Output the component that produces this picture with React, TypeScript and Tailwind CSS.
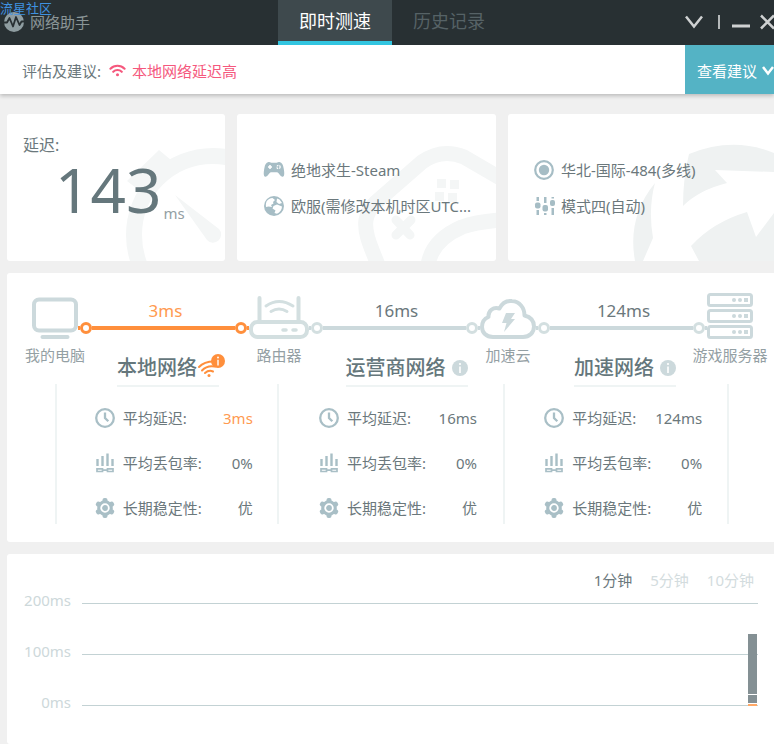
import React, { useState } from 'react'

const lineColor = '#ccd9dc'

const columns = [
    { name: '本地网络', delay: '3ms', loss: '0%', stability: '优', bad: true },
    { name: '运营商网络', delay: '16ms', loss: '0%', stability: '优', bad: false },
    { name: '加速网络', delay: '124ms', loss: '0%', stability: '优', bad: false },
]

const ranges = ['1分钟', '5分钟', '10分钟']

// 102px of plot height stand for 200ms
const sample = [
    { ms: 118, color: 'bg-[#849094]' },
    { ms: 16, color: 'bg-[#849094]' },
    { ms: 4, color: 'bg-[#ffa866]' },
]

const LogoIcon = () => (
    <svg width="20" height="20" viewBox="0 0 20 20" className="shrink-0">
        <circle cx="10" cy="10" r="10" fill="#8f9da1" />
        <path d="M0 10.500h3L5.500 6l3.500 8.500L12 5l3.500 8 2-3.500H20" fill="none" stroke="#283033" strokeWidth="1.800" strokeLinejoin="round" />
    </svg>
)

const WifiIcon = ({ className, color }: { className?: string; color: string }) => (
    <svg viewBox="0 0 18 14" className={className} fill="none" stroke={color} strokeWidth="2.200" strokeLinecap="round">
        <path d="M1.500 5a10.500 10.500 0 0 1 15 0M4.500 8.300a6.300 6.300 0 0 1 9 0" />
        <circle cx="9" cy="11.500" r="1.600" fill={color} stroke="none" />
    </svg>
)

const WeakWifiIcon = () => (
    <svg width="22" height="20" viewBox="0 0 22 20" fill="none" stroke="#ff8f3c" strokeWidth="2" strokeLinecap="round">
        <path d="M2 9Q7 3.500 17 3.500M5 12.500q5-5.500 13-4M8 15q4-3.500 8-1.500" />
        <circle cx="12" cy="17.500" r="1.500" fill="#ff8f3c" stroke="none" />
    </svg>
)

const InfoIcon = ({ className, color }: { className?: string; color: string }) => (
    <svg viewBox="0 0 16 16" className={className}>
        <circle cx="8" cy="8" r="8" fill={color} />
        <circle cx="8" cy="4" r="1.100" fill="#fff" />
        <path d="M8 6.500v6.500" stroke="#fff" strokeWidth="1.600" />
    </svg>
)

const PadIcon = () => (
    <svg width="22" height="20" viewBox="0 0 22 20" className="shrink-0">
        <path d="M5.500 2C7 1.500 8 2.800 9 2.800h4c1 0 2-1.300 3.500-.8 2.500.5 3.500 2.500 4.200 6.500.7 4 1 7.500-.7 8.200-2 .7-3.500-2.700-5-3.900-.6-.5-1-.5-1.500-.5h-5c-.5 0-.9 0-1.500.5-1.500 1.200-3 4.600-5 3.900C.3 16 .6 12.500 1.300 8.500 2 4.500 3 2.500 5.500 2z" fill="#a6bdc5" />
        <path d="M7 5v4M5 7h4" stroke="#fff" strokeWidth="1.600" />
        <circle cx="15.500" cy="7" r="1.700" fill="none" stroke="#fff" strokeWidth="1.200" strokeDasharray="1.700 1" />
    </svg>
)

const GlobeIcon = () => (
    <svg width="22" height="20" viewBox="0 0 22 20" className="shrink-0">
        <circle cx="11" cy="10" r="10" fill="#a6bdc5" />
        <path d="M3.500 5.500C5 3.500 7 2 9.500 2l2.500 2-2 2 .5 1.500L8 9l1 2-3.500-.5L3 11c-.3-2 0-4 .5-5.500zM14 2.500l2.500 1 2.500 3.500-3 1-2.500-2zM10.500 10l3.500-1.500 5 2c0 3-2 6-5 7.300L11.500 17l1-2.500-3-2z" fill="#fff" />
    </svg>
)

const TargetIcon = () => (
    <svg width="22" height="20" viewBox="0 0 22 20" className="shrink-0">
        <circle cx="11" cy="10" r="8.800" fill="none" stroke="#a6bdc5" strokeWidth="2.200" />
        <circle cx="11" cy="10" r="5.200" fill="#a6bdc5" />
    </svg>
)

const SlidersIcon = () => (
    <svg width="22" height="20" viewBox="0 0 22 20" className="shrink-0" fill="#a6bdc5">
        <path d="M3.500 1h2.500v4h-2.500zM3.500 14h2.500v5h-2.500zM11 1h2.500v6h-2.500zM11 17h2.500v2h-2.500zM18.500 1h2.500v1.500h-2.500zM18.500 12h2.500v7h-2.500z" />
        <rect x="2" y="6.500" width="5.500" height="6" rx="2" />
        <rect x="9.500" y="9" width="5.500" height="6.500" rx="2" />
        <rect x="17" y="4" width="5" height="6" rx="2" />
    </svg>
)

const ClockIcon = () => (
    <svg width="20" height="20" viewBox="0 0 20 20" fill="none" stroke="#a9bfc6" strokeWidth="2.300" className="shrink-0">
        <circle cx="10" cy="10" r="8.800" />
        <path d="M10 4.500v5.500l3.300 3.300" />
    </svg>
)

const LossIcon = () => (
    <svg width="20" height="20" viewBox="0 0 20 20" fill="none" stroke="#a9bfc6" strokeWidth="2" className="shrink-0">
        <path d="M2.500 6v7M7.500 3v10M12.500 .5V13M17.500 6v7" strokeWidth="2.400" />
        <path d="M2 15.800h5.500v2.700H2zM12.500 15.800H18v2.700h-5.500zM7.500 17.200h5" strokeWidth="1.700" />
    </svg>
)

const GearIcon = () => (
    <svg width="20" height="20" viewBox="0 0 20 20" className="shrink-0">
        <g fill="#a9bfc6">
            <circle cx="10" cy="10" r="7.800" />
            <rect x="7.500" y="0" width="5" height="20" rx="2" />
            <rect x="7.500" y="0" width="5" height="20" rx="2" transform="rotate(60 10 10)" />
            <rect x="7.500" y="0" width="5" height="20" rx="2" transform="rotate(120 10 10)" />
        </g>
        <circle cx="10" cy="10" r="3.800" fill="none" stroke="#fff" strokeWidth="1.800" />
    </svg>
)

const ComputerIcon = () => (
    <svg width="46" height="46" viewBox="0 0 46 46" fill="none" stroke={lineColor}>
        <rect x="2" y="6.500" width="42" height="31" rx="5" strokeWidth="4" />
        <path d="M10.500 44h25" strokeWidth="4" strokeLinecap="round" />
    </svg>
)

const RouterIcon = () => (
    <svg width="60" height="46" viewBox="0 0 60 46" fill="none" stroke="#d3dfe0" strokeLinecap="round">
        <path d="M10.500 5v22M49.500 5v22" strokeWidth="4" />
        <rect x="2" y="29" width="56" height="15" rx="6.500" strokeWidth="4" />
        <path d="M17 13q13-9 27 0M22 18.500q8-5 16 0" strokeWidth="3" />
        <path d="M34 37h3M44 37h3" strokeWidth="3.500" />
    </svg>
)

const CloudIcon = () => (
    <svg width="56" height="46" viewBox="0 0 56 46">
        <path d="M13 44C6 44 2 39.500 2 34c0-5 2.500-8.500 6.500-10C8 18 13 13.500 19.500 15.500 22 10 27 7.500 32 8c7.500.5 12.500 6.500 12.500 14.500C50.500 24 54 28 54 33.500 54 39.500 49.500 44 43 44z" fill="none" stroke={lineColor} strokeWidth="4" strokeLinejoin="round" />
        <path d="M26 20h9l-4 6h4L24 39l2.500-9H22z" fill={lineColor} />
    </svg>
)

const ServerIcon = () => (
    <svg width="46" height="46" viewBox="0 0 46 46">
        {[0, 16, 32].map((y) => (
            <g key={y} transform={`translate(0 ${y})`}>
                <rect x="1.500" y="1.500" width="43" height="11" rx="2" fill="none" stroke={lineColor} strokeWidth="3" />
                <circle cx="27" cy="7" r="2" fill={lineColor} />
                <circle cx="33" cy="7" r="2" fill={lineColor} />
                <rect x="37" y="5" width="4" height="4" fill={lineColor} />
            </g>
        ))}
    </svg>
)

const TopoNode = ({ label, children }: { label: string; children: React.ReactNode }) => (
    <div className="flex w-min shrink-0 flex-col items-center">
        {children}
        <div className="flex w-0 justify-center">
            <span className="mt-1 leading-6 whitespace-nowrap text-[#94a0a4]">{label}</span>
        </div>
    </div>
)

const Link = ({ label, hot }: { label: string; hot?: boolean }) => (
    <div className="flex-1 pt-1.5">
        <p className={`pl-1 text-center text-[17px] leading-6 ${hot ? 'text-[#ff9a50]' : 'text-[#6b787c]'}`}>{label}</p>
        <div className="-mt-px flex h-3 items-center">
            <i className={`h-1 w-0.5 ${hot ? 'bg-[#ff8f3c]' : 'bg-[#ccd9dc]'}`} />
            <i className={`size-3 rounded-full border-3 ${hot ? 'border-[#ff8f3c]' : 'border-[#d3dfe0]'}`} />
            <i className={`h-1 flex-1 ${hot ? 'bg-[#ff8f3c]' : 'bg-[#ccd9dc]'}`} />
            <i className={`size-3 rounded-full border-3 ${hot ? 'border-[#ff8f3c]' : 'border-[#d3dfe0]'}`} />
            <i className={`h-1 w-0.5 ${hot ? 'bg-[#ff8f3c]' : 'bg-[#ccd9dc]'}`} />
        </div>
    </div>
)

const Stat = ({ icon, label, value, hot }: { icon: React.ReactNode; label: string; value: string; hot?: boolean }) => (
    <div className="flex h-5 w-[158px] items-center">
        {icon}
        <dt className="ml-2 whitespace-nowrap">{label}</dt>
        <dd className={`ml-auto ${hot ? 'text-[#ff9a50]' : ''}`}>{value}</dd>
    </div>
)

const App = () => {

    const [range, setRange] = useState<string>('1分钟');

    return (
        <div className="flex min-h-screen flex-col overflow-hidden bg-[#f0f0f0] font-['Noto_Sans','Noto_Sans_CJK_SC',sans-serif] text-[15px] leading-5 text-[#6b787c]">

            {/* Title bar */}
            <header className="relative flex h-[45px] shrink-0 bg-[#283033]">
                <span className="absolute top-0 left-0 text-[13px] leading-4 text-[#3f92e0]">流星社区</span>
                <div className="flex w-[278px] items-center gap-1.5 pb-0.5 pl-1 text-[#8b9698]">
                    <LogoIcon />
                    <h1>网络助手</h1>
                </div>
                <nav className="flex text-[18px]">
                    <button className="border-b-4 border-[#32c5e0] bg-[#3e494d] px-[21px] text-white">即时测速</button>
                    <button className="border-b-4 border-transparent px-[21px] text-[#566266]">历史记录</button>
                </nav>
                <div className="ml-auto flex items-center pb-0.5">
                    <button aria-label="菜单" className="mr-3.5">
                        <svg width="20" height="16" viewBox="0 0 20 16" fill="none" stroke="#cfd1d2" strokeWidth="2.500"><path d="M2 2.500l8 10 8-10" /></svg>
                    </button>
                    <i className="h-3.5 w-0.5 bg-[#b4b8b9]" />
                    <button aria-label="最小化" className="ml-3">
                        <svg width="18" height="16" viewBox="0 0 18 16" stroke="#cfd1d2" strokeWidth="3"><path d="M0 12h18" /></svg>
                    </button>
                    <button aria-label="关闭" className="ml-2.5 w-3.5 overflow-hidden">
                        <svg width="17" height="16" viewBox="0 0 17 16" stroke="#cfd1d2" strokeWidth="2.500"><path d="M1 1.500l13 13M14 1.500l-13 13" /></svg>
                    </button>
                </div>
            </header>

            {/* Advice */}
            <section className="flex h-[49px] shrink-0 items-center bg-white pl-[22px] shadow-[0_2px_4px_rgba(0,0,0,0.22)]">
                <div className="flex items-center pt-0.5">
                    <span>评估及建议:</span>
                    <WifiIcon color="#f5587d" className="mr-1.5 ml-2 w-[17px]" />
                    <span className="text-[#f5587d]">本地网络延迟高</span>
                </div>
                <button className="ml-auto flex w-[89px] items-center justify-between self-stretch bg-[#54b3c5] pt-0.5 pl-3 text-white">
                    查看建议
                    <svg width="12" height="12" viewBox="0 0 12 12" fill="none" stroke="#fff" strokeWidth="2.500"><path d="M1 2l5 6.500 5-6.500" /></svg>
                </button>
            </section>

            <main className="flex flex-1 flex-col gap-3 pt-5 pl-[7px]">
                <section className="grid h-[147px] shrink-0 grid-cols-[218fr_259fr_266fr] gap-3">
                    <div className="relative overflow-hidden rounded-[3px] bg-white pt-[19px] pl-4">
                        <svg className="absolute right-0 bottom-0" width="100" height="116" viewBox="125 144 100 116" fill="#f4f6f6">
                            <circle cx="213" cy="234" r="79" fill="none" stroke="#f4f6f6" strokeWidth="16" />
                            <path d="M127 180l32-31 12 10-31 31z" />
                            <path d="M175 194l44 34a8 8 0 1 1-12 11z" />
                        </svg>
                        <h2 className="relative text-[16px] leading-6">延迟:</h2>
                        <p className="relative flex items-end pl-8 text-[#65777c]">
                            <span className="text-[62px] leading-[64px]">143</span>
                            <span className="pl-0.5 leading-4 text-[#94a0a4]">ms</span>
                        </p>
                    </div>
                    <div className="relative flex flex-col justify-center gap-4 overflow-hidden rounded-[3px] bg-white pl-[26px]">
                        <svg className="absolute right-0 bottom-0" width="140" height="120" viewBox="356 140 140 120" fill="none" stroke="#f4f6f6" strokeWidth="15">
                            <path d="M378 264C371 246 364 232 366 219q2-10 9-17l47-41q20-14 42-5l36 21" />
                            <path d="M428 264q4-25 34-38 14-5 38-7" />
                            <path d="M396 219l14 15M411 219l-15 15" strokeWidth="9" strokeLinecap="round" />
                            <path d="M437 178h9v9h-9zM450 179h9v9h-9zM435 191h9v9h-9zM448 192h9v9h-9z" fill="#f4f6f6" stroke="none" />
                        </svg>
                        <div className="relative flex items-center gap-1.5">
                            <PadIcon />
                            <span>绝地求生-Steam</span>
                        </div>
                        <div className="relative flex items-center gap-1.5">
                            <GlobeIcon />
                            <span className="whitespace-nowrap">欧服(需修改本机时区UTC...</span>
                        </div>
                    </div>
                    <div className="relative flex flex-col justify-center gap-4 overflow-hidden rounded-l-[3px] bg-white pl-[25px]">
                        <svg className="absolute right-0 bottom-0" width="142" height="120" viewBox="632 140 142 120" fill="#eff2f2">
                            <path d="M689 153q44-18 85-1v19l-59-2 12 13q-28 7-44 23 0-28 6-52z" />
                            <path d="M655 182q-28 34-20 78h8l10-23q-5-29 2-55z" />
                            <path d="M691 245q22-24 56-34l9 25 18-24v48h-75z" />
                        </svg>
                        <div className="relative flex items-center gap-1.5">
                            <TargetIcon />
                            <span>华北-国际-484(多线)</span>
                        </div>
                        <div className="relative flex items-center gap-1.5">
                            <SlidersIcon />
                            <span>模式四(自动)</span>
                        </div>
                    </div>
                </section>

                {/* Route from the computer to the game server */}
                <section className="h-[269px] shrink-0 rounded-l-[3px] bg-white pt-5">
                    <div className="flex h-[58px] items-start pr-[21px] pl-[25px]">
                        <TopoNode label="我的电脑"><ComputerIcon /></TopoNode>
                        <Link label="3ms" hot />
                        <TopoNode label="路由器"><RouterIcon /></TopoNode>
                        <Link label="16ms" />
                        <TopoNode label="加速云"><CloudIcon /></TopoNode>
                        <Link label="124ms" />
                        <TopoNode label="游戏服务器"><ServerIcon /></TopoNode>
                    </div>
                    <div className="grid grid-cols-[1fr_1fr_auto] pr-[98px] pl-[110px]">
                        {columns.map((c) => (
                            <div key={c.name} className="flex h-9 w-max items-center border-b-2 border-[#eff4f4] text-[#65777c]">
                                <h3 className="text-[20px] font-medium">{c.name}</h3>
                                {c.bad ? (
                                    <div className="relative w-[22px]">
                                        <WeakWifiIcon />
                                        <InfoIcon color="#ff8f3c" className="absolute -top-1 -right-1.5 size-3.5" />
                                    </div>
                                ) : (
                                    <InfoIcon color={lineColor} className="ml-1.5 size-4" />
                                )}
                            </div>
                        ))}
                    </div>
                    <div className="mr-[45px] ml-12 -mt-[3px] grid grid-cols-[222fr_227fr_226fr]">
                        {columns.map((c) => (
                            <dl key={c.name} className="flex flex-col items-center gap-[25px] border-l-2 border-[#eff4f4] pt-6 pb-1.5 pl-3.5 last:border-r-2">
                                <Stat icon={<ClockIcon />} label="平均延迟:" value={c.delay} hot={c.bad} />
                                <Stat icon={<LossIcon />} label="平均丢包率:" value={c.loss} />
                                <Stat icon={<GearIcon />} label="长期稳定性:" value={c.stability} />
                            </dl>
                        ))}
                    </div>
                </section>

                {/* Chart */}
                <section className="flex-1 rounded-l-[3px] bg-white pt-4 pr-4 pl-4">
                    <div className="flex justify-end gap-[18px] pr-1">
                        {ranges.map((r) => (
                            <button
                                key={r}
                                onClick={() => setRange(r)}
                                className={r === range ? 'text-[#6b787c]' : 'text-[#d3dcde]'}
                            >
                                {r}
                            </button>
                        ))}
                    </div>
                    <div className="relative mt-[3px] flex flex-col gap-[31px]">
                        {['200ms', '100ms', '0ms'].map((label) => (
                            <div key={label} className="flex h-5 items-center">
                                <span className="w-12 pb-1.5 text-right text-[#cdd8da]">{label}</span>
                                <i className="ml-[11px] h-px flex-1 bg-[#c3d2d4]" />
                            </div>
                        ))}
                        <div className="absolute right-px bottom-[9px] flex w-[9px] flex-col gap-px bg-white">
                            {sample.map((s) => (
                                <i key={s.ms} className={s.color} style={{ height: Math.round(s.ms * 102 / 200) }} />
                            ))}
                        </div>
                    </div>
                </section>
            </main>
        </div>
    )
}

export default App
